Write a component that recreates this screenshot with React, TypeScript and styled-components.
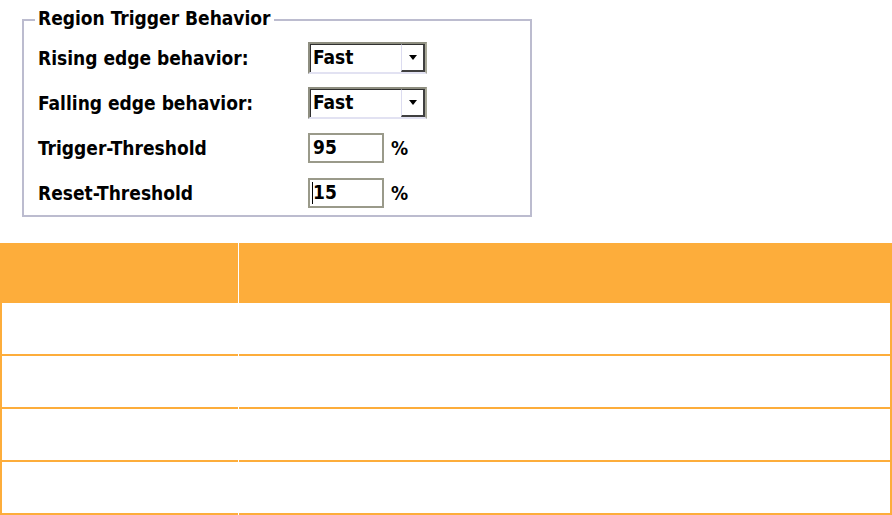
import React from "react";
import styled, { createGlobalStyle } from "styled-components";

const Global = createGlobalStyle`
  html, body { margin: 0; padding: 0; background: #ffffff; }
  body { font-family: "DejaVu Sans Condensed", "DejaVu Sans", Verdana, sans-serif; font-stretch: condensed; }
  * { box-sizing: border-box; }
`;

const ORANGE = "#fdad3b";
const TEXT_SIZE = "19px";

const Panel = styled.div`
  height: 243px;
  padding: 19px 0 0 22px;
`;

const GroupBox = styled.div`
  position: relative;
  width: 510px;
  height: 198px;
  border: 2px solid #bcbccf;
  padding: 14px 0 0 14px;
`;

const Legend = styled.span`
  position: absolute;
  top: -14px;
  left: 11px;
  padding: 0 3px;
  background: #ffffff;
  font-size: ${TEXT_SIZE};
  font-weight: bold;
  line-height: 22px;
  color: #000;
`;

const FormGrid = styled.div`
  display: grid;
  grid-template-columns: 270px auto;
  grid-auto-rows: 45px;
  align-items: center;
`;

const Label = styled.div`
  font-size: ${TEXT_SIZE};
  font-weight: bold;
  color: #000;
  white-space: nowrap;
`;

const ControlCell = styled.div`
  display: flex;
  align-items: center;
  gap: 7px;
`;

const Select = styled.div`
  display: flex;
  width: 119px;
  height: 32px;
  border-top: 2px solid #8e8e80;
  border-left: 2px solid #8e8e80;
  border-right: 2px solid #a8a898;
  border-bottom: 2px solid #e2e2f2;
  background: #fff;
`;

const SelectValue = styled.div`
  flex: 1;
  border-top: 1px solid #303030;
  border-left: 1px solid #303030;
  padding-left: 2px;
  font-size: ${TEXT_SIZE};
  font-weight: bold;
  line-height: 25px;
  color: #000;
`;

const DropButton = styled.div`
  width: 24px;
  display: flex;
  align-items: center;
  justify-content: center;
  border-left: 1px solid #dcdcf0;
  border-top: 1px solid #303030;
  border-right: 2px solid #404040;
  border-bottom: 2px solid #404040;
  background: #ffffff;
`;

const Arrow = styled.span`
  width: 0;
  height: 0;
  border-left: 4px solid transparent;
  border-right: 4px solid transparent;
  border-top: 5px solid #000;
`;

const TextBox = styled.div<{ $caret?: boolean }>`
  position: relative;
  width: 76px;
  height: 30px;
  border: 2px solid #9a9a8a;
  padding-left: 3px;
  font-size: ${TEXT_SIZE};
  font-weight: bold;
  line-height: 25px;
  color: #000;
  background: #fff;
  ${(p) =>
    p.$caret
      ? `&::before { content: ""; position: absolute; left: 2px; top: 2px; width: 1px; height: 22px; background: #000; }`
      : ""}
`;

const Unit = styled.span`
  font-size: ${TEXT_SIZE};
  font-weight: bold;
  color: #000;
`;

const Table = styled.div`
  display: flex;
  flex-direction: column;
  width: 892px;
`;

const Row = styled.div<{ $head?: boolean }>`
  display: grid;
  grid-template-columns: 238px 653px;
  column-gap: 1px;
  height: ${(p) => (p.$head ? "60px" : "53px")};
`;

const HeadCell = styled.div`
  background: ${ORANGE};
`;

const Cell = styled.div<{ $first?: boolean; $last?: boolean }>`
  background: #fff;
  border-bottom: 2px solid ${ORANGE};
  border-left: ${(p) => (p.$first ? `2px solid ${ORANGE}` : "none")};
  border-right: ${(p) => (p.$last ? `2px solid ${ORANGE}` : "none")};
`;

export default function App() {
  return (
    <>
      <Global />
      <Panel>
        <GroupBox>
          <Legend>Region Trigger Behavior</Legend>
          <FormGrid>
            <Label>Rising edge behavior:</Label>
            <ControlCell>
              <Select>
                <SelectValue>Fast</SelectValue>
                <DropButton>
                  <Arrow />
                </DropButton>
              </Select>
            </ControlCell>
            <Label>Falling edge behavior:</Label>
            <ControlCell>
              <Select>
                <SelectValue>Fast</SelectValue>
                <DropButton>
                  <Arrow />
                </DropButton>
              </Select>
            </ControlCell>
            <Label>Trigger-Threshold</Label>
            <ControlCell>
              <TextBox>95</TextBox>
              <Unit>%</Unit>
            </ControlCell>
            <Label>Reset-Threshold</Label>
            <ControlCell>
              <TextBox $caret>15</TextBox>
              <Unit>%</Unit>
            </ControlCell>
          </FormGrid>
        </GroupBox>
      </Panel>
      <Table>
        <Row $head>
          <HeadCell />
          <HeadCell />
        </Row>
        {[0, 1, 2, 3].map((i) => (
          <Row key={i}>
            <Cell $first />
            <Cell $last />
          </Row>
        ))}
      </Table>
    </>
  );
}
